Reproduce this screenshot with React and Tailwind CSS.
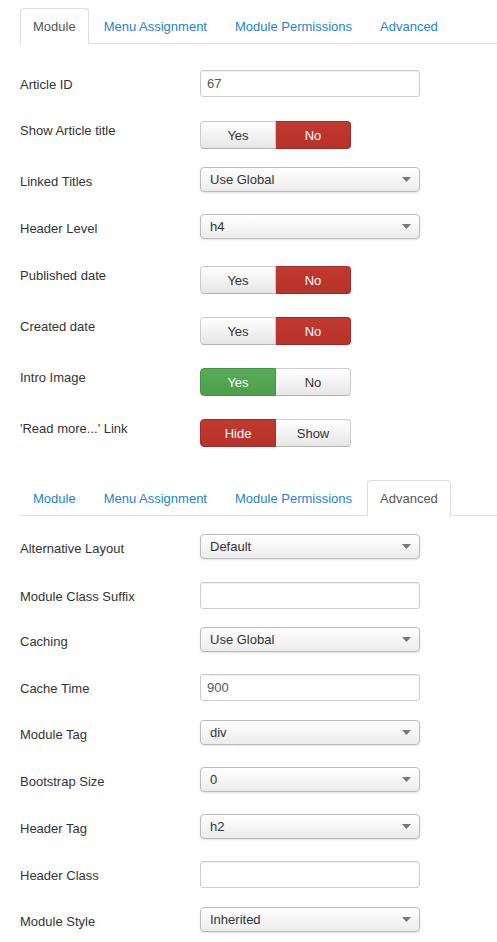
const tabs = ['Module', 'Menu Assignment', 'Module Permissions', 'Advanced'];

const Tabs = ({ active }) => (
    <ul className="flex border-b border-[#ddd]">
        {tabs.map((t, i) => (
            <li key={t} className="-mb-px mr-[2px]">
                <a
                    className={
                        i === active
                            ? 'block px-[12px] pt-[9px] pb-[7px] leading-[18px] border border-[#ddd] border-b-white bg-white rounded-t-[4px] text-[#555]'
                            : 'block px-[12px] pt-[9px] pb-[7px] leading-[18px] border border-transparent rounded-t-[4px] text-[#2384d3]'
                    }
                >
                    {t}
                </a>
            </li>
        ))}
    </ul>
);

const TextInput = ({ value }) => (
    <div className="w-[220px] h-[27px] border border-[#ccc] rounded-[3px] bg-white px-[6px] pt-px flex items-center text-[#555] shadow-[inset_0_1px_1px_rgba(0,0,0,0.075)]">
        {value}
    </div>
);

const Select = ({ value }) => (
    <div className="w-[220px] h-[25px] border border-[#bbb] rounded-[4px] bg-linear-to-b from-white to-[#ececec] pl-[9px] pr-[8px] flex items-center justify-between text-[#333] shadow-[0_1px_2px_rgba(0,0,0,0.12)]">
        <span>{value}</span>
        <svg width="9" height="5" viewBox="0 0 9 5">
            <polygon points="0,0 9,0 4.5,5" fill="#777" />
        </svg>
    </div>
);

const plain = 'bg-linear-to-b from-white to-[#e6e6e6] border-[#ccc] border-b-[#b3b3b3] text-[#333]';
const red = 'bg-linear-to-b from-[#c1392f] to-[#b6322b] border-[#a22d27] text-white';
const green = 'bg-linear-to-b from-[#58ab58] to-[#4b9f4b] border-[#449444] text-white';

const Toggle = ({ left, right, on }) => (
    <div className="flex h-[28px]">
        <div
            className={`w-[76px] pt-px flex items-center justify-center border rounded-l-[4px] ${on === 'left' ? (left === 'Yes' ? green : red) : plain}`}
        >
            {left}
        </div>
        <div
            className={`w-[75px] pt-px flex items-center justify-center border border-l-0 rounded-r-[4px] ${on === 'right' ? red : plain}`}
        >
            {right}
        </div>
    </div>
);

const Row = ({ label, mt, toggle, children }) => (
    <div className={`flex items-start ${mt}`}>
        <label className={`w-[180px] leading-[18px] text-[#333] ${toggle ? 'pt-px' : 'pt-[6px]'}`}>{label}</label>
        {children}
    </div>
);

export default function App() {
    return (
        <div
            className="bg-white min-h-[942px] pl-[20px] text-[13px] text-[#333]"
            style={{ fontFamily: '"Liberation Sans", Arial, sans-serif' }}
        >
            <div className="pt-[8px]">
                <Tabs active={0} />
            </div>

            <Row label="Article ID" mt="mt-[26px]">
                <TextInput value="67" />
            </Row>
            <Row label="Show Article title" mt="mt-[24px]" toggle>
                <Toggle left="Yes" right="No" on="right" />
            </Row>
            <Row label="Linked Titles" mt="mt-[18px]">
                <Select value="Use Global" />
            </Row>
            <Row label="Header Level" mt="mt-[22px]">
                <Select value="h4" />
            </Row>
            <Row label="Published date" mt="mt-[27px]" toggle>
                <Toggle left="Yes" right="No" on="right" />
            </Row>
            <Row label="Created date" mt="mt-[23px]" toggle>
                <Toggle left="Yes" right="No" on="right" />
            </Row>
            <Row label="Intro Image" mt="mt-[23px]" toggle>
                <Toggle left="Yes" right="No" on="left" />
            </Row>
            <Row label="'Read more...' Link" mt="mt-[23px]" toggle>
                <Toggle left="Hide" right="Show" on="left" />
            </Row>

            <div className="mt-[33px]">
                <Tabs active={3} />
            </div>

            <Row label="Alternative Layout" mt="mt-[18px]">
                <Select value="Default" />
            </Row>
            <Row label="Module Class Suffix" mt="mt-[23px]">
                <TextInput value="" />
            </Row>
            <Row label="Caching" mt="mt-[18px]">
                <Select value="Use Global" />
            </Row>
            <Row label="Cache Time" mt="mt-[22px]">
                <TextInput value="900" />
            </Row>
            <Row label="Module Tag" mt="mt-[19px]">
                <Select value="div" />
            </Row>
            <Row label="Bootstrap Size" mt="mt-[22px]">
                <Select value="0" />
            </Row>
            <Row label="Header Tag" mt="mt-[22px]">
                <Select value="h2" />
            </Row>
            <Row label="Header Class" mt="mt-[22px]">
                <TextInput value="" />
            </Row>
            <Row label="Module Style" mt="mt-[19px]">
                <Select value="Inherited" />
            </Row>
        </div>
    );
}
